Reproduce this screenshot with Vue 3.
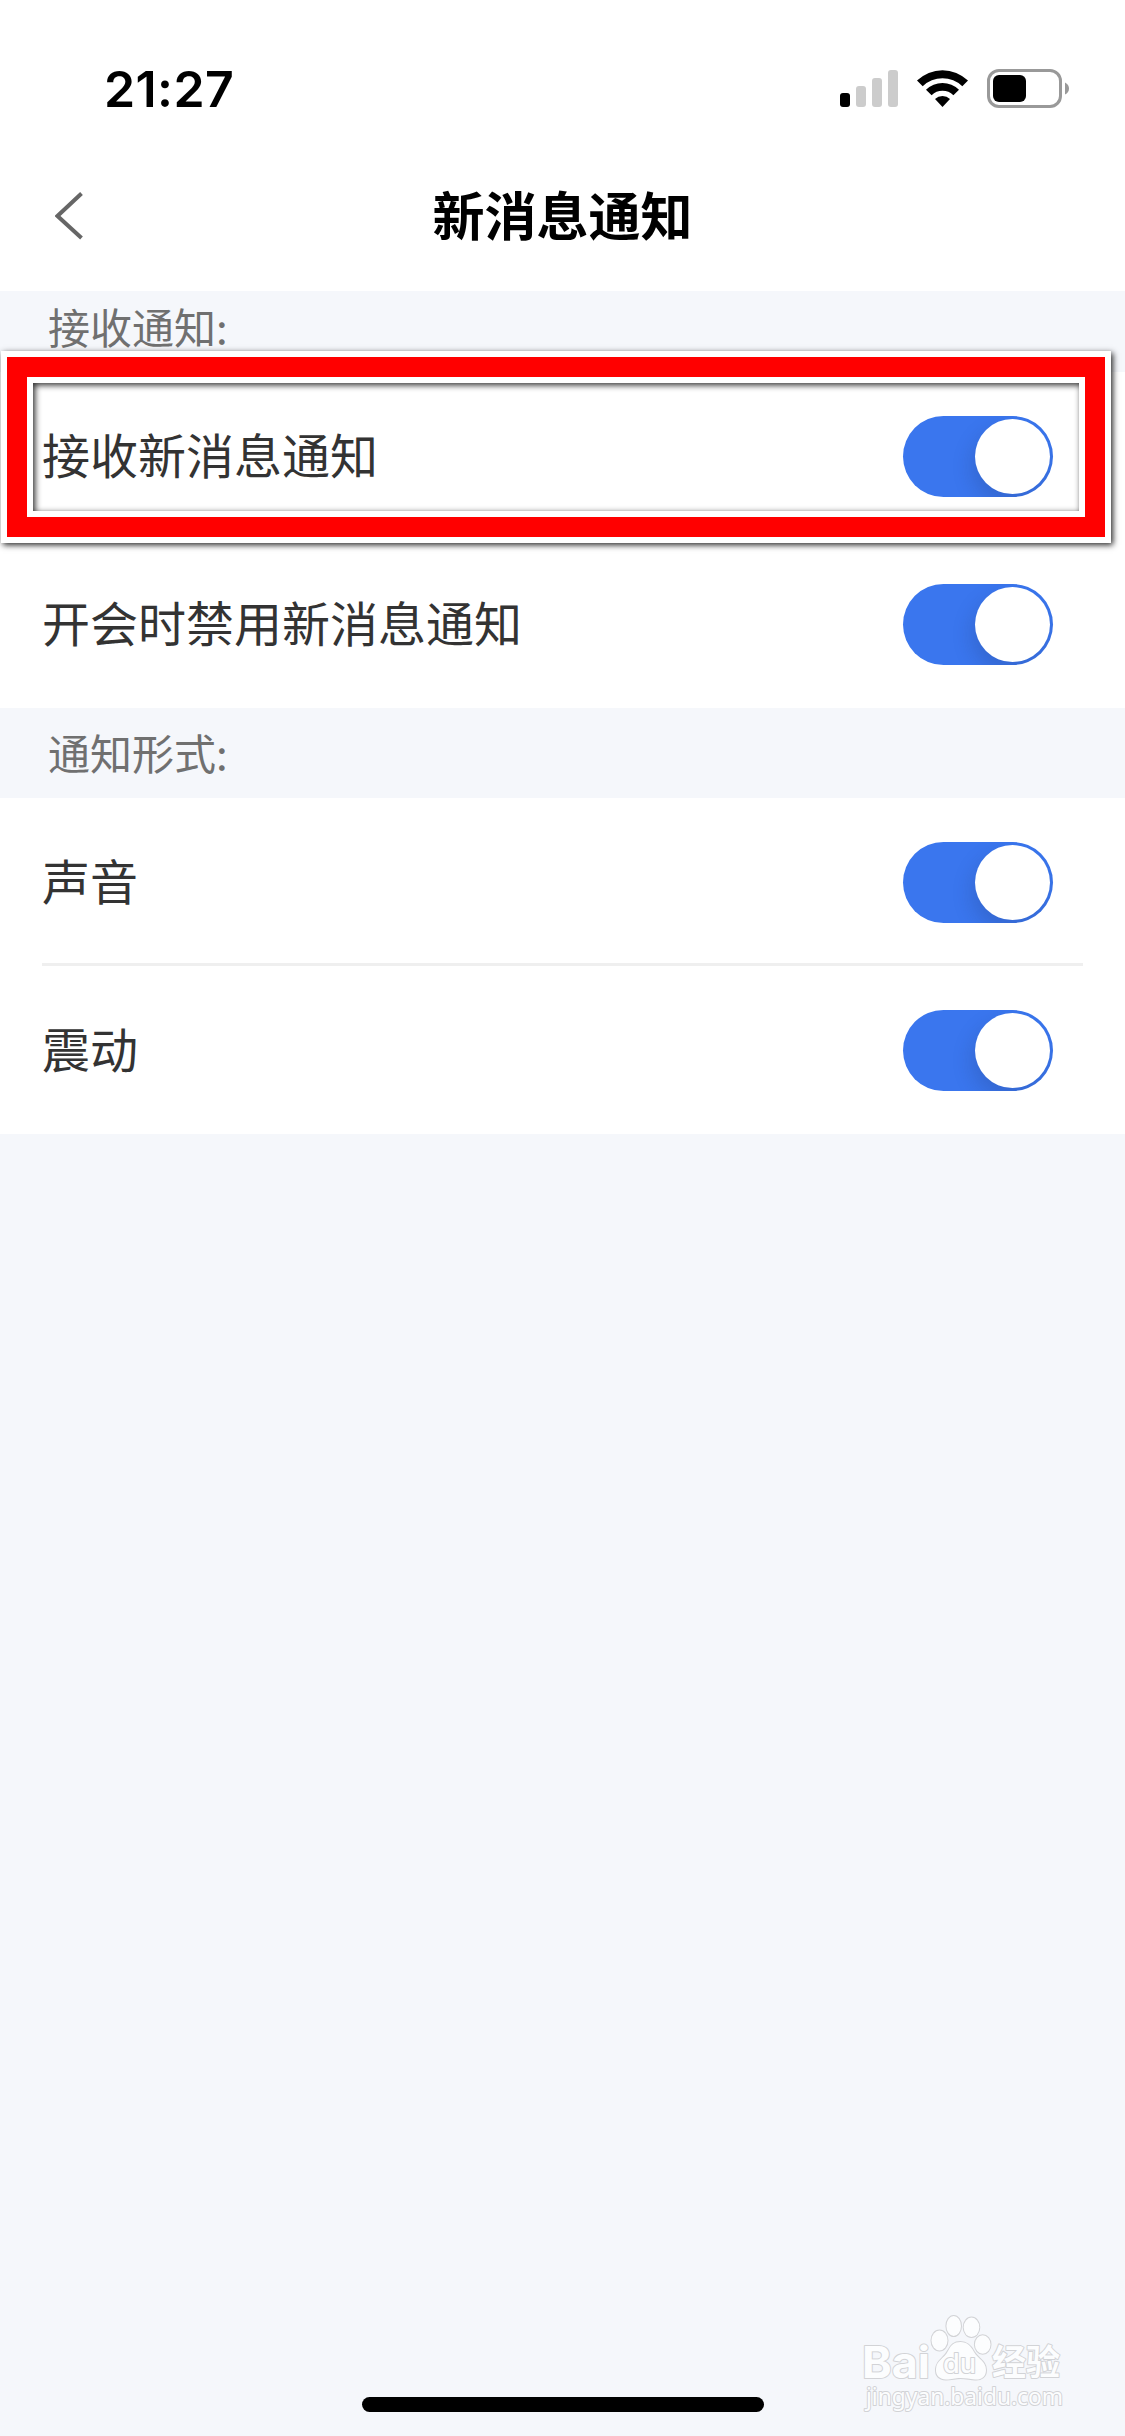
<template>
  <div class="page">
    <header class="top">
      <div class="status-bar">
        <span class="time">21:27</span>
        <svg class="status-icons" width="232" height="44" viewBox="0 0 232 44">
          <!-- 信号 -->
          <rect x="0" y="25" width="10" height="14" rx="3" fill="#000" />
          <rect x="16" y="18" width="10" height="21" rx="3" fill="#ccc" />
          <rect x="32" y="10" width="10" height="29" rx="3" fill="#ccc" />
          <rect x="48" y="2" width="10" height="37" rx="3" fill="#ccc" />
          <!-- wifi -->
          <path d="M77 12.6 A36.5 36.5 0 0 1 128 12.6 L122.3 18.2 A28.6 28.6 0 0 0 82.7 18.2 Z" />
          <path d="M86 21.8 A23.6 23.6 0 0 1 119 21.8 L113.4 27.3 A15.6 15.6 0 0 0 91.6 27.3 Z" />
          <path d="M95 30.9 A11 11 0 0 1 110 30.9 L102.5 39 Z" />
          <!-- 电池 -->
          <rect x="148.5" y="2.5" width="72" height="36" rx="10.5" fill="none" stroke="#999" stroke-width="3" />
          <rect x="153" y="7" width="33" height="27" rx="6" fill="#000" />
          <path d="M225 14.5 Q229 16.5 229 20.5 Q229 24.5 225 26.5 Z" fill="#999" />
        </svg>
      </div>
      <nav class="nav-bar">
        <svg class="back" width="28" height="48" viewBox="0 0 28 48" @click="goBack">
          <path d="M26.5 1.5 L2.5 24 L26.5 46" fill="none" stroke="#666" stroke-width="4" />
        </svg>
        <h1>新消息通知</h1>
      </nav>
    </header>

    <section v-for="group in groups" :key="group.title">
      <div class="group-title" :class="{ tucked: group.tucked }">{{ group.title }}</div>
      <div v-for="item in group.items" :key="item.label" class="row">
        <span class="label">{{ item.label }}</span>
        <button class="switch" :class="{ on: item.on }" @click="item.on = !item.on">
          <i class="knob"></i>
        </button>
        <div v-if="item.marked" class="mark"><div class="mark-inner"></div></div>
      </div>
    </section>

    <footer class="bottom">
      <div class="home-indicator"></div>
    </footer>

    <svg class="watermark" width="240" height="130" viewBox="0 0 240 130">
      <g fill="#fcfdfe" stroke="#d2d3d6" stroke-width="2" paint-order="stroke" stroke-linejoin="round">
        <ellipse cx="79.5" cy="40.5" rx="8" ry="10" />
        <ellipse cx="93.7" cy="26" rx="7.3" ry="10" />
        <ellipse cx="111.5" cy="27.3" rx="7.8" ry="9.7" />
        <ellipse cx="122.7" cy="44.5" rx="7.8" ry="9.3" />
        <path d="M100.5 42 C107 42 111 46 114 52 C118 59 126 61 126 70 C126 77 121 80 115 79.5 C109 79 106 78 100.5 78 C95 78 92 79.5 86 79.5 C80 79 75.5 76 76 69 C76.5 60 84 59 88 51 C91 45 94 42 100.5 42 Z" />
        <text x="2" y="77.5" class="wm-brand" textLength="68" lengthAdjust="spacingAndGlyphs">Bai</text>
        <text x="83" y="73" class="wm-du" textLength="33" lengthAdjust="spacingAndGlyphs">du</text>
        <text x="132" y="75" class="wm-cn" textLength="68" lengthAdjust="spacingAndGlyphs">经验</text>
        <text x="6" y="105" class="wm-url" textLength="197" lengthAdjust="spacingAndGlyphs">jingyan.baidu.com</text>
      </g>
    </svg>
  </div>
</template>

<script setup>
import { ref } from 'vue';

const groups = ref([
  {
    title: '接收通知:',
    tucked: true, // 顶部有一部分被导航栏盖住
    items: [
      { label: '接收新消息通知', on: true, marked: true },
      { label: '开会时禁用新消息通知', on: true },
    ],
  },
  {
    title: '通知形式:',
    items: [
      { label: '声音', on: true },
      { label: '震动', on: true },
    ],
  },
]);

const goBack = () => {
  window.history.back();
};
</script>

<style>
body {
  margin: 0;
  background-color: #f5f7fb;
}
</style>

<style scoped>
.page {
  position: relative;
  display: flex;
  flex-direction: column;
  width: 1125px;
  height: 2436px;
  overflow: hidden;
  background-color: #f5f7fb;
  font-family: "Noto Sans CJK SC", sans-serif;
}

.top {
  height: 291px;
  flex: none;
  background-color: #fff;
}

.status-bar {
  display: flex;
  justify-content: space-between;
  box-sizing: border-box;
  height: 141px;
  padding: 68px 53px 0 104px;
}

.time {
  font-family: Inter, sans-serif;
  font-size: 50px;
  font-weight: 600;
  line-height: 42px;
  letter-spacing: 0.4px;
  color: #000;
}

.nav-bar {
  display: grid;
  grid-template-columns: 150px 1fr 150px;
  align-items: center;
  height: 150px;
}

.back {
  margin-left: 55px;
  cursor: pointer;
}

h1 {
  margin: 0 0 5px;
  font-size: 52px;
  font-weight: 700;
  line-height: 60px;
  text-align: center;
  color: #000;
}

.group-title {
  height: 90px;
  padding-left: 48px;
  font-size: 42px;
  line-height: 87px;
  color: #707070;
}

.group-title.tucked {
  height: 81px;
  line-height: 69px;
}

.row {
  position: relative;
  display: flex;
  align-items: center;
  justify-content: space-between;
  box-sizing: border-box;
  height: 168px;
  padding: 0 72px 0 42px;
  background-color: #fff;
}

/* 行间分隔线 */
.row:not(:last-child)::after {
  content: "";
  position: absolute;
  left: 42px;
  right: 42px;
  bottom: 0;
  height: 3px;
  background-color: #efefef;
}

.label {
  margin-bottom: 6px;
  font-size: 48px;
  line-height: 72px;
  color: #333;
}

.switch {
  display: flex;
  width: 150px;
  height: 81px;
  margin-top: 1px;
  padding: 3px;
  border: none;
  border-radius: 41px;
  overflow: hidden;
  background-color: #ddd;
  cursor: pointer;
}

.switch.on {
  justify-content: flex-end;
  background-color: #3a76ee;
}

.knob {
  width: 75px;
  height: 75px;
  border-radius: 50%;
  background-color: #fff;
  box-shadow: -3px 10px 20px rgba(30, 50, 100, 0.22);
}

/* 红色标注框 */
.mark {
  position: absolute;
  z-index: 2;
  top: -21px;
  left: 1px;
  box-sizing: border-box;
  width: 1110px;
  height: 192px;
  padding: 20px;
  border: 6px solid #fff;
  background: linear-gradient(#f00, #f00) top / 100% 20px no-repeat,
    linear-gradient(#f00, #f00) bottom / 100% 20px no-repeat,
    linear-gradient(#f00, #f00) left / 20px 100% no-repeat,
    linear-gradient(#f00, #f00) right / 20px 100% no-repeat;
  background-origin: padding-box;
  box-shadow: 2px 2px 6px rgba(0, 0, 0, 0.85);
  pointer-events: none;
}

.mark-inner {
  box-sizing: border-box;
  height: 100%;
  border: 6px solid #fff;
  box-shadow: inset 2px 2px 6px rgba(0, 0, 0, 0.85);
}

.bottom {
  display: flex;
  justify-content: center;
  margin-top: auto;
  padding-bottom: 24px;
}

.home-indicator {
  width: 402px;
  height: 15px;
  border-radius: 8px;
  background-color: #000;
}

.watermark {
  position: absolute;
  left: 860px;
  top: 2300px;
}

.wm-brand {
  font: 700 44px Inter, sans-serif;
}

.wm-du {
  font: 500 27px Inter, sans-serif;
}

.wm-cn {
  font: 700 35px "Noto Sans CJK SC", sans-serif;
}

.wm-url {
  font: 400 23px "Noto Sans", sans-serif;
}
</style>
